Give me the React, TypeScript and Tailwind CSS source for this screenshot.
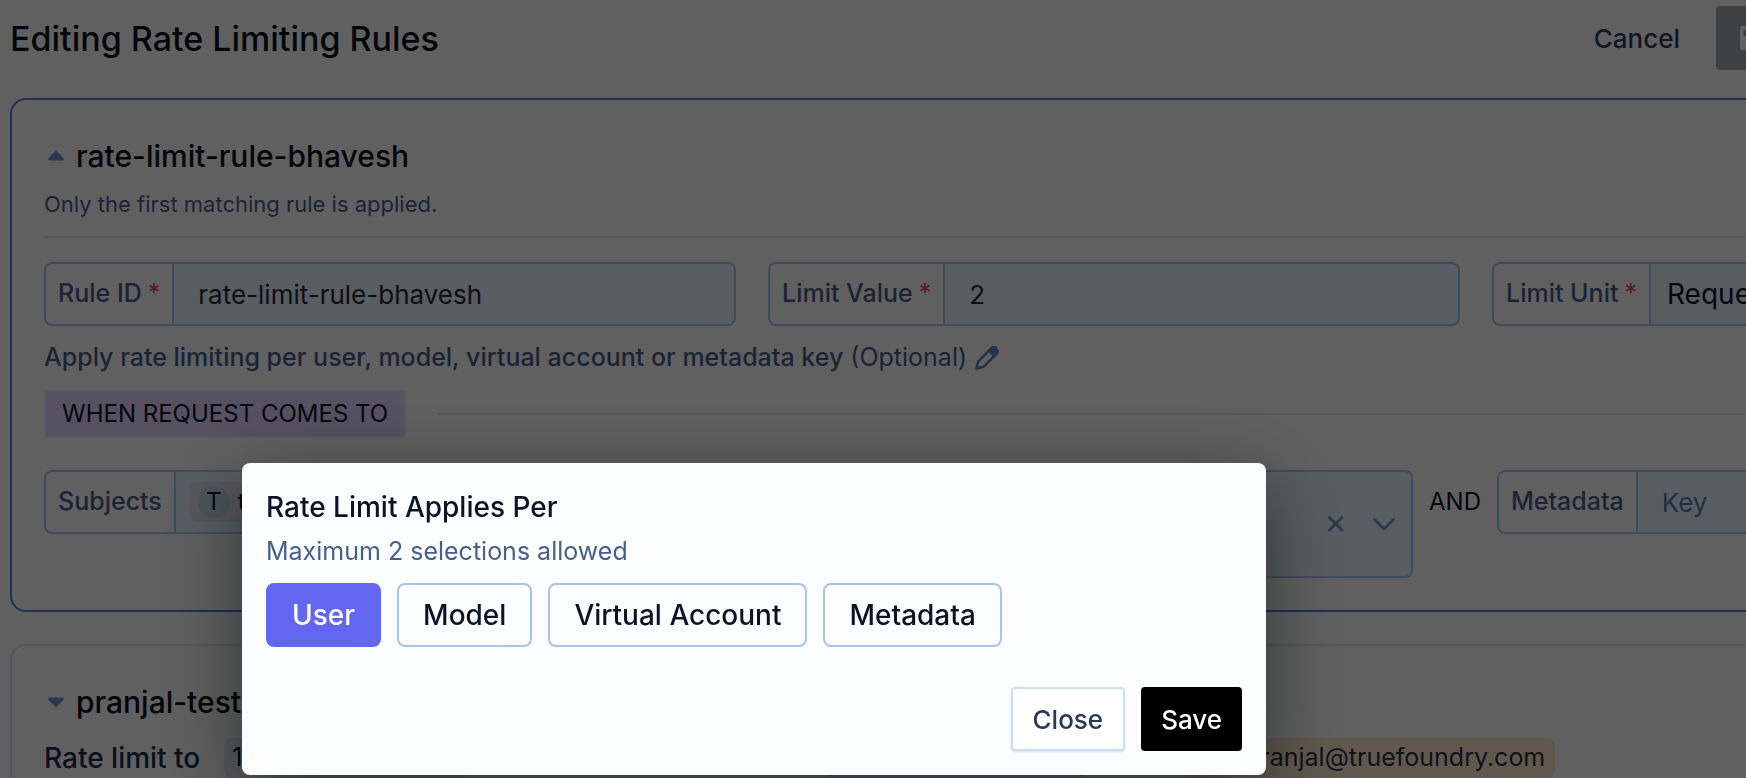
import type { ReactNode } from "react";

export default function App() {
  return (
    <div className="relative h-screen overflow-hidden bg-[#fcfdff] font-[Inter,sans-serif] text-[#0b1324]">
      <header className="flex h-[76px] w-[calc(100%+42px)] items-center justify-between pl-2.5">
        <h1 className="text-[34px] font-medium text-[#0b0f19]">
          Editing Rate Limiting Rules
        </h1>

        <div className="flex items-center gap-9">
          <button type="button" className="text-[26px] font-medium text-[#2a3c5e]">
            Cancel
          </button>

          <button
            type="button"
            aria-label="Save rules"
            disabled
            className="flex h-16 w-[72px] items-center justify-center rounded bg-[#a6a8ab]"
          >
            <FloppyIcon />
          </button>
        </div>
      </header>

      {/* Rules */}

      <main className="w-[calc(100%+472px)] space-y-8 pt-[22px] pl-2.5">
        <section className="rounded-2xl border-2 border-[#4880ea] p-8">
          <RuleTitle icon={<CaretUpIcon />}>rate-limit-rule-bhavesh</RuleTitle>

          <p className="mt-2 text-[22px] leading-8 text-[#475c8c]">
            Only the first matching rule is applied.
          </p>

          <hr className="mt-4 border-t-2 border-[#dbeafa]" />

          <div className="mt-6 grid grid-cols-3 gap-8">
            <div className="flex">
              <FieldLabel htmlFor="rule-id" required>Rule ID</FieldLabel>
              <input
                id="rule-id"
                defaultValue="rate-limit-rule-bhavesh"
                className="h-16 min-w-0 flex-1 rounded-r-lg border-2 border-[#a7c4ec] bg-[#e5f5ff] px-6 text-[26px] text-[#27292e]"
              />
            </div>

            <div className="flex">
              <FieldLabel htmlFor="limit-value" required>Limit Value</FieldLabel>
              <input
                id="limit-value"
                defaultValue="2"
                className="h-16 min-w-0 flex-1 rounded-r-lg border-2 border-[#a7c4ec] bg-[#e5f5ff] px-6 text-[26px] text-[#27292e]"
              />
            </div>

            <div className="flex">
              <FieldLabel htmlFor="limit-unit" required>Limit Unit</FieldLabel>
              <select
                id="limit-unit"
                className="h-16 min-w-0 flex-1 appearance-none rounded-r-lg border-2 border-[#a7c4ec] bg-[#e5f5ff] px-4 text-[28px]"
              >
                <option>Requests</option>
              </select>
            </div>
          </div>

          <div className="mt-4 flex h-8 items-center gap-2 text-[25px] text-[#475c8c]">
            <p>
              <span className="font-medium">
                Apply rate limiting per user, model, virtual account or metadata key
              </span>{" "}
              (Optional)
            </p>

            <button type="button" aria-label="Edit">
              <PencilIcon />
            </button>
          </div>

          <div className="mt-4 flex items-center gap-8">
            <span className="flex h-12 items-center rounded border-2 border-[#efeaf5] bg-[#e2d4fc] px-4 text-2xl">
              WHEN REQUEST COMES TO
            </span>
            <span className="h-0.5 flex-1 bg-[#dbeafa]" />
          </div>

          <div className="mt-8 flex items-start gap-4">
            <div className="flex w-[1369px] items-start gap-8">
              <div className="flex flex-1">
                <FieldLabel htmlFor="subjects">Subjects</FieldLabel>

                <div className="flex h-16 flex-1 items-center rounded-r-lg border-2 border-[#a7c4ec] bg-[#e5f5ff] px-3.5">
                  <span className="flex h-10 items-center gap-2 rounded-lg bg-[#e6e2f8] px-2 text-2xl">
                    <span className="flex size-8 items-center justify-center rounded-full bg-[#c3dfee]">
                      T
                    </span>
                    <span className="font-medium">t</span>
                  </span>
                  <input id="subjects" className="min-w-0 flex-1 outline-none" />
                </div>
              </div>

              <div className="flex h-[108px] flex-1 items-center justify-end gap-7 rounded-lg border-2 border-[#a7c4ec] bg-[#e5f5ff] px-4">
                <button type="button" aria-label="Clear">
                  <CrossIcon />
                </button>
                <button type="button" aria-label="Open">
                  <ChevronIcon />
                </button>
              </div>
            </div>

            <span className="flex h-16 items-center text-2xl">AND</span>

            <div className="flex flex-1">
              <FieldLabel htmlFor="metadata">Metadata</FieldLabel>
              <input
                id="metadata"
                placeholder="Key"
                className="h-16 min-w-0 flex-1 rounded-r-lg border-2 border-[#a7c4ec] bg-[#e5f5ff] px-6 text-[26px] placeholder:text-[#6078ac]"
              />
            </div>
          </div>
        </section>

        <section className="rounded-2xl border-2 border-[#dbe6fa] p-8">
          <RuleTitle icon={<CaretDownIcon />}>pranjal-test</RuleTitle>

          <div className="mt-3 flex items-center text-[25px]">
            <p className="text-[28px] leading-10 font-medium text-[#1c2a4a]">Rate limit to</p>
            <span className="ml-6 flex h-10 w-[244px] items-center rounded-lg bg-[#e3ebf8] px-2">
              1
            </span>
            <span className="ml-[356px] h-10 w-[262px] rounded-lg bg-[#dfe2fa]" />
            <span className="ml-[97px] flex h-10 w-[372px] items-center justify-end rounded-lg bg-[#fde8d0] px-2.5 text-[#27303f]">
              pranjal@truefoundry.com
            </span>
          </div>
        </section>
      </main>

      {/* Modal */}

      <div className="fixed inset-0 flex items-start bg-black/62 pt-[463px] pl-[242px]">
        <div
          role="dialog"
          aria-labelledby="modal-title"
          className="w-[1024px] rounded-lg bg-[#fcfdff] p-6 shadow-[0_20px_80px_rgba(0,0,0,0.5)]"
        >
          <h2 id="modal-title" className="text-[28px] leading-10 font-medium">
            Rate Limit Applies Per
          </h2>
          <p className="mt-1 text-[25px] leading-10 text-[#475f8c]">
            Maximum 2 selections allowed
          </p>

          <div className="mt-3 flex gap-4">
            <Option selected>User</Option>
            <Option>Model</Option>
            <Option>Virtual Account</Option>
            <Option>Metadata</Option>
          </div>

          <div className="mt-10 flex justify-end gap-4 text-[26px] font-medium">
            <button
              type="button"
              className="h-16 rounded border-2 border-[#cddff8] bg-white px-5 text-[#2a3958] shadow-sm"
            >
              Close
            </button>
            <button type="button" className="h-16 rounded bg-black px-5 text-white">
              Save
            </button>
          </div>
        </div>
      </div>
    </div>
  );
}

function RuleTitle({ icon, children }: { icon: ReactNode; children: ReactNode }) {
  return (
    <div className="flex items-center gap-3 pl-1">
      {icon}
      <h2 className="text-[30px] leading-[48px] font-medium text-[#0b0f19]">
        {children}
      </h2>
    </div>
  );
}

function FieldLabel({
  htmlFor,
  required,
  children,
}: {
  htmlFor: string;
  required?: boolean;
  children: ReactNode;
}) {
  return (
    <label
      htmlFor={htmlFor}
      className="flex h-16 shrink-0 items-center gap-1.5 rounded-l-lg border-2 border-r-0 border-[#a7c4ec] px-3 text-[25px] font-medium text-[#475c8c]"
    >
      {children}
      {required && <span className="font-normal text-[#e5484d]">*</span>}
    </label>
  );
}

function Option({ selected, children }: { selected?: boolean; children: ReactNode }) {
  return (
    <button
      type="button"
      aria-pressed={!!selected}
      className={`h-16 rounded-lg border-2 px-6 text-[28px] font-medium ${
        selected
          ? "border-[#6366f1] bg-[#6366f1] text-white"
          : "border-[#a7c4ec] text-[#0b1324]"
      }`}
    >
      {children}
    </button>
  );
}

function CaretUpIcon() {
  return (
    <svg width="16" height="10" viewBox="0 0 16 10" className="fill-[#7893c8]">
      <path d="M6.9.6a1.6 1.6 0 0 1 2.2 0l6.3 6.5c1 1 .3 2.4-1 2.4H1.6C.3 9.5-.4 8.1.6 7.1z" />
    </svg>
  );
}

function CaretDownIcon() {
  return (
    <svg width="16" height="10" viewBox="0 0 16 10" className="fill-[#7893c8]">
      <path d="M6.9 9.4a1.6 1.6 0 0 0 2.2 0l6.3-6.5c1-1 .3-2.4-1-2.4H1.6C.3.5-.4 1.9.6 2.900z" />
    </svg>
  );
}

function CrossIcon() {
  return (
    <svg width="18" height="18" viewBox="0 0 18 18" fill="none" className="stroke-[#7893c8]" strokeWidth="3" strokeLinecap="round">
      <path d="M2.500 2.500l12.500 12.500M15 2.500L2.500 15" />
    </svg>
  );
}

function ChevronIcon() {
  return (
    <svg width="22" height="14" viewBox="0 0 22 14" fill="none" className="stroke-[#7893c8]" strokeWidth="2.800" strokeLinecap="round" strokeLinejoin="round">
      <path d="M1.500 2.500l9.500 9.500 9.500-9.500" />
    </svg>
  );
}

function PencilIcon() {
  return (
    <svg width="24" height="24" viewBox="0 0 24 24" fill="none" className="block stroke-[#6885be]" strokeWidth="2.600" strokeLinejoin="round">
      <path d="M1.500 22.500l1.700-7L16.400 2.300a3 3 0 0 1 4.300 0l1 1a3 3 0 0 1 0 4.300L8.500 20.800z" />
      <path d="M14 4.700l2.400-2.400a3 3 0 0 1 4.300 0l1 1a3 3 0 0 1 0 4.300L19.300 10z" className="fill-[#6885be]" />
    </svg>
  );
}

function FloppyIcon() {
  return (
    <svg width="24" height="24" viewBox="0 0 24 24" fill="#fcfdff">
      <path
        fillRule="evenodd"
        d="M3 0h14.500L24 6.500V21a3 3 0 0 1-3 3H3a3 3 0 0 1-3-3V3a3 3 0 0 1 3-3zm1.500 3.500a1 1 0 0 0-1 1V9a1 1 0 0 0 1 1H16a1 1 0 0 0 1-1V4.500a1 1 0 0 0-1-1zM12 13.500a3.500 3.500 0 1 0 0 7 3.500 3.500 0 0 0 0-7z"
      />
    </svg>
  );
}
